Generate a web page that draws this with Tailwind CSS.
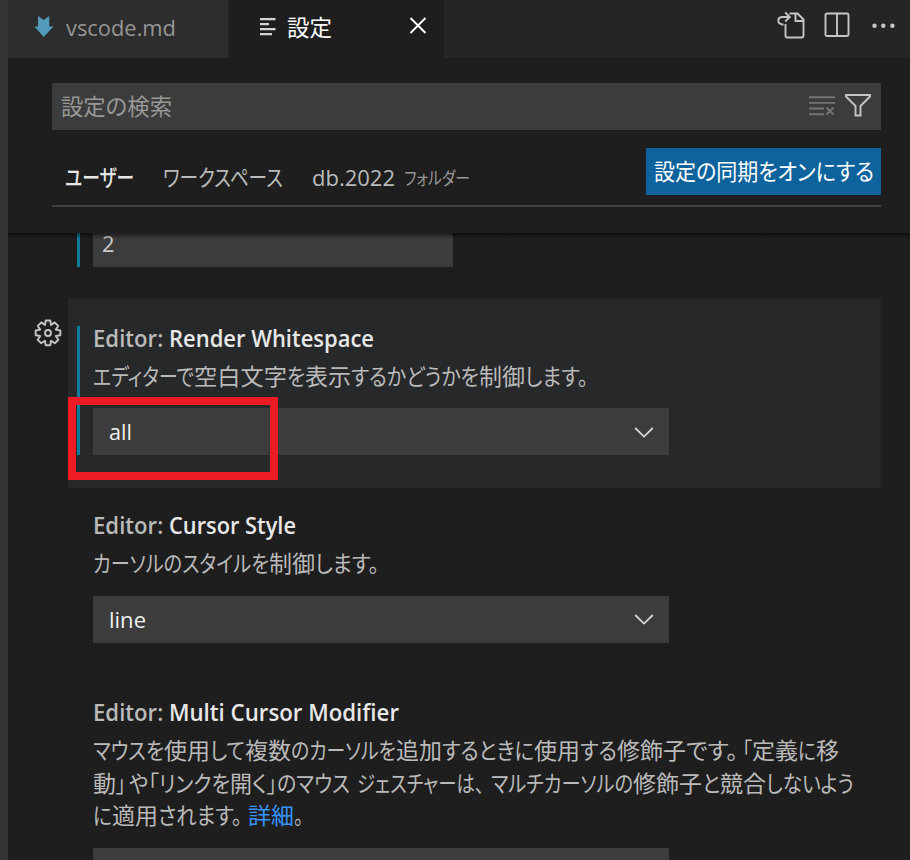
<!DOCTYPE html>
<html lang="ja">
<head>
<meta charset="utf-8">
<title>設定</title>
<script src="https://cdn.jsdelivr.net/npm/@tailwindcss/browser@4"></script>
</head>
<body class="w-[910px] h-[860px] overflow-hidden bg-[#1e1e1e] font-['Open_Sans','Noto_Sans_CJK_JP',sans-serif] text-[22.5px] text-[#bababa] flex">
<div class="w-2 h-full bg-[#333333] shrink-0"></div>
<div class="flex-1 h-full flex flex-col min-w-0">
  <!-- tabs -->
  <div class="h-[58px] shrink-0 bg-[#252526] flex leading-[56px] whitespace-nowrap">
    <div class="w-[220px] bg-[#2d2d2d] flex pl-[26px] text-[#959595]">
      <svg class="w-[20px] h-[22px] mt-[16px] mr-[12px] shrink-0" viewBox="0 0 20 22"><path d="M4 0L9.7 4L15.300 0V10.500H19.500L9.700 21L0.500 10.500H4Z" fill="#519aba"/></svg>
      <span data-w="110">vscode.md</span>
    </div>
    <div class="w-[216px] bg-[#1e1e1e] border-l border-[#252526] flex pl-[31px] text-white">
      <svg class="w-[17px] h-[18px] mt-[18px] mr-[10px] shrink-0" viewBox="0 0 17 18" fill="#d4d4d4"><path d="M0 0h15.500v2.300H0zM0 5h9v2.300H0zM0 10h15.500v2.300H0zM0 15h12v2.300H0z"/></svg>
      <span data-w="45">設定</span>
      <svg class="w-[18px] h-[18px] mt-[17px] ml-[77px] shrink-0" viewBox="0 0 18 18" fill="none" stroke="#fff" stroke-width="1.900"><path d="M1.500 1L16.500 16M16.500 1L1.500 16"/></svg>
    </div>
    <div class="flex-1 flex pl-[333px]">
      <svg class="w-[28px] h-[28px] mt-[11px] shrink-0" viewBox="0 0 28 28" fill="none" stroke="#c5c5c5" stroke-width="1.900"><path d="M12.500 2.500H20.500L26.500 8.500V24.500Q26.500 26.500 24.500 26.500H10Q8.500 26.500 8.500 24.500V13M18.500 2.500V10H26.500"/><path d="M6.500 13.700C-0.800 12.500 0 6 6 6H12.300M8.200 1.500L12.800 6L8.200 10.500"/></svg>
      <svg class="w-[26px] h-[26px] mt-[12px] ml-[19px] shrink-0" viewBox="0 0 26 26" fill="none" stroke="#c5c5c5" stroke-width="1.900"><rect x="1.500" y="1.500" width="23" height="22.500" rx="1.500"/><path d="M13 1.500V24"/></svg>
      <svg class="w-[24px] h-[6px] mt-[23px] ml-[21px] shrink-0" viewBox="0 0 24 6" fill="#c5c5c5"><circle cx="3.500" cy="2.800" r="2.200"/><circle cx="12.300" cy="2.800" r="2.200"/><circle cx="21.400" cy="2.800" r="2.200"/></svg>
    </div>
  </div>
  <!-- search and scope header -->
  <div class="h-[175px] shrink-0 pt-[25px] pl-[44px] pr-[29px] whitespace-nowrap">
    <div class="h-[47px] bg-[#3c3c3c] flex pl-[9px] leading-[47px] text-[#989898]">
      <span data-w="111">設定の検索</span>
      <svg class="w-[26px] h-[20px] mt-[13px] ml-[637px] shrink-0" viewBox="0 0 26 20" fill="none" stroke="#747474" stroke-width="1.900"><path d="M0 1.200H26M0 6.900H26M0 12.500H15M0 18.200H15M17.500 11.500L24.500 18.500M24.500 11.500L17.500 18.500"/></svg>
      <svg class="w-[28px] h-[24px] mt-[10px] ml-[9px] shrink-0" viewBox="0 0 28 24" fill="none" stroke="#c5c5c5" stroke-width="1.900"><path d="M2 2H26V3.500L16.500 13V22.500H11.500V13L2 3.500Z"/></svg>
    </div>
    <div class="h-[77px] border-b-2 border-[#404040] flex items-start pt-[18px] pl-[13px] leading-[60px]">
      <span data-w="69" class="text-[#e7e7e7] font-medium">ユーザー</span>
      <span data-w="120" class="ml-[29px]">ワークスペース</span>
      <span data-w="83" class="ml-[29px]">db.2022</span>
      <span data-w="66" class="ml-[9px] text-[18px] text-[#999999]">フォルダー</span>
      <div class="ml-auto h-[47px] w-[235px] bg-[#0e639c] text-white leading-[47px] pl-[8px]"><span data-w="220">設定の同期をオンにする</span></div>
    </div>
  </div>
  <!-- settings list -->
  <div class="flex-1 min-h-0 overflow-hidden pr-[29px] whitespace-nowrap relative">
    <div class="absolute inset-x-0 top-0 h-[6px] z-10 bg-linear-to-b from-black/55 to-transparent"></div>
    <div class="h-[34px] ml-[69px] border-l-[3px] border-[#0c7d9d] pl-[13px]">
      <div class="w-[360px] h-full bg-[#3c3c3c] pl-[9px] leading-[22px] text-[#cccccc]"><span data-w="12.500">2</span></div>
    </div>
    <div class="mt-[32px] h-[189px] flex">
      <div class="w-[60px] pt-[20px] pl-[26px] shrink-0">
        <svg class="w-[28px] h-[28px]" viewBox="0 0 28 28" fill="none" stroke="#c5c5c5" stroke-width="1.900" stroke-linejoin="round"><path d="M11.700 1.500H16.300L17 6L20.700 3.400L24.200 6.900L21.800 10.600L26.300 11.500V16.200L21.800 17L24.400 20.800L20.900 24.200L17 21.700L16.300 26.300H11.700L10.900 21.700L7.100 24.200L3.700 20.800L6.200 17L1.700 16.200V11.500L6.200 10.600L3.800 6.900L7.300 3.400L11 6Z"/><circle cx="14" cy="14" r="3"/></svg>
      </div>
      <div class="flex-1 bg-[#27282a] pt-[27px] pl-[9px] relative">
        <div class="h-[129px] border-l-[3px] border-[#0c7d9d] pl-[13px]">
          <div class="h-[26px] leading-[25px] font-semibold"><span data-w="76">Editor: </span><span data-w="205" class="text-[#e7e7e7]">Render Whitespace</span></div>
          <div class="h-[56px] leading-[50px]"><span data-w="101">エディターで</span><span data-w="93">空白文字</span><span data-w="18">を</span><span data-w="46">表示</span><span data-w="128">するかどうかを</span><span data-w="46">制御</span><span data-w="63">します。</span></div>
          <div class="w-[576px] h-[47px] bg-[#3c3c3c] pl-4 pr-[15px] flex justify-between items-center leading-[47px] text-[#f0f0f0]"><span data-w="23">all</span>
            <svg class="w-[20px] h-[12px]" viewBox="0 0 20 12" fill="none" stroke="#d4d4d4" stroke-width="1.800"><path d="M1.200 2L10 10.600L18.800 2"/></svg></div>
        </div>
        <div class="absolute left-0 top-[98px] w-[210px] h-[83px] border-8 border-[#ed1c24]"></div>
      </div>
    </div>
    <div class="pl-[85px] pt-[25px] h-[187px]">
      <div class="h-[26px] leading-[25px] font-semibold"><span data-w="76">Editor: </span><span data-w="127" class="text-[#e7e7e7]">Cursor Style</span></div>
      <div class="h-[57px] leading-[50px]"><span data-w="176">カーソルのスタイルを</span><span data-w="46">制御</span><span data-w="64">します。</span></div>
      <div class="w-[576px] h-[47px] bg-[#3c3c3c] pl-4 pr-[15px] flex justify-between items-center leading-[47px] text-[#f0f0f0]"><span data-w="37">line</span>
        <svg class="w-[20px] h-[12px] relative -top-px" viewBox="0 0 20 12" fill="none" stroke="#d4d4d4" stroke-width="1.800"><path d="M1.200 2L10 10.600L18.800 2"/></svg></div>
    </div>
    <div class="pl-[85px] pt-[25px]">
      <div class="h-[35px] leading-[25px] font-semibold"><span data-w="76">Editor: </span><span data-w="230" class="text-[#e7e7e7]">Multi Cursor Modifier</span></div>
      <div class="h-[113px] leading-[32.500px]">
        <div><span data-w="71">マウスを</span><span data-w="46">使用</span><span data-w="35">して</span><span data-w="46">複数</span><span data-w="105">のカーソルを</span><span data-w="46">追加</span><span data-w="92">するときに</span><span data-w="46">使用</span><span data-w="37">する</span><span data-w="69">修飾子</span><span data-w="52">です。</span><span data-w="10" class="ml-[4px]">「</span><span data-w="46">定義</span><span data-w="18">に</span><span data-w="23">移</span></div>
        <div><span data-w="23">動</span><span data-w="10">」</span><span data-w="19" class="ml-[3px]">や</span><span data-w="11">「</span><span data-w="71">リンクを</span><span data-w="22">開</span><span data-w="15">く</span><span data-w="10">」</span><span data-w="73">のマウス</span><span class="inline-block w-[7px]"> </span><span data-w="127">ジェスチャーは、</span><span data-w="142" class="ml-[7px]">マルチカーソルの</span><span data-w="69">修飾子</span><span data-w="18">と</span><span data-w="46">競合</span><span data-w="88">しないよう</span></div>
        <div><span data-w="19">に</span><span data-w="46">適用</span><span data-w="84">されます。</span><span data-w="46" class="ml-[6px] text-[#3794ff]">詳細</span><span data-w="9">。</span></div>
      </div>
      <div class="w-[576px] h-[47px] bg-[#3c3c3c]"></div>
    </div>
  </div>
</div>
<script>
// Condense each run of glyphs to its column width, again whenever its natural width changes.
var observer = new ResizeObserver(function (entries) {
  entries.forEach(function (entry) {
    var natural = entry.borderBoxSize[0].inlineSize;
    var w = parseFloat(entry.target.parentNode.dataset.w);
    if (natural) entry.target.style.transform = 'scaleX(' + (w / natural) + ')';
  });
});
document.querySelectorAll('[data-w]').forEach(function (el) {
  var inner = document.createElement('span');
  inner.style.cssText = 'display:inline-block;white-space:pre;transform-origin:0 50%;font-feature-settings:"palt"';
  inner.textContent = el.textContent;
  el.textContent = '';
  el.appendChild(inner);
  el.style.display = 'inline-block';
  el.style.flexShrink = '0';
  el.style.width = el.dataset.w + 'px';
  observer.observe(inner);
});
</script>
</body>
</html>
